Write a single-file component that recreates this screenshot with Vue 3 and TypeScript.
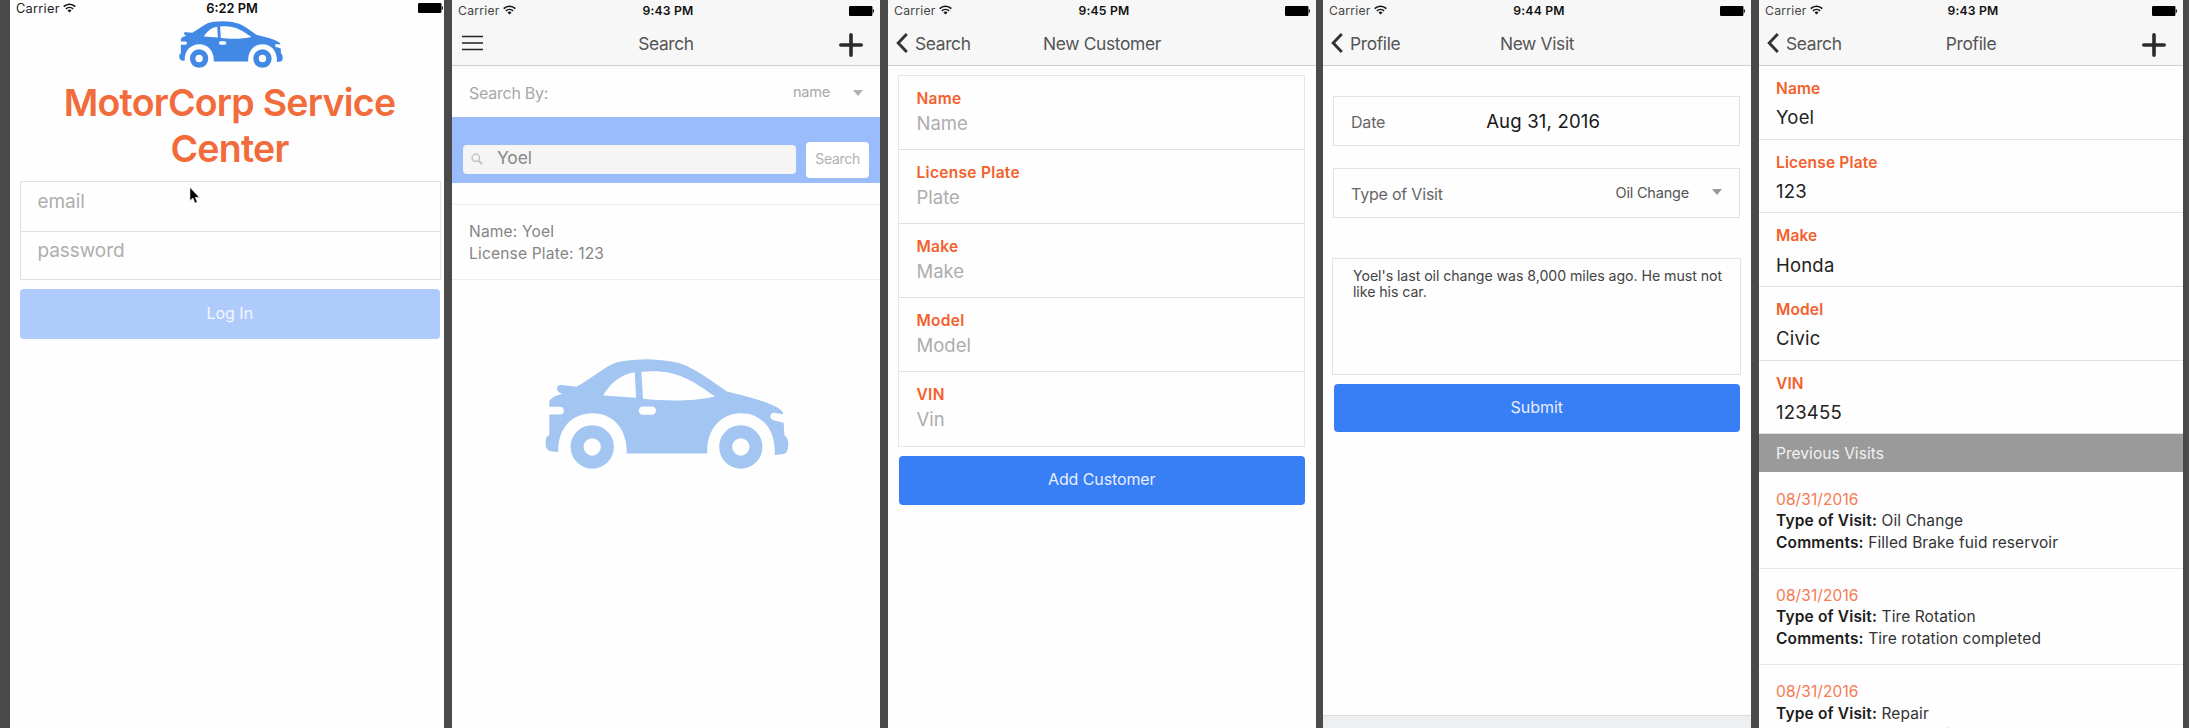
<script setup lang="ts">
import { defineComponent, h } from 'vue'

interface Field {
  label: string
  placeholder: string
  value: string
}

interface Visit {
  date: string
  type: string
  comments: string
}

const fields: Field[] = [
  { label: 'Name', placeholder: 'Name', value: 'Yoel' },
  { label: 'License Plate', placeholder: 'Plate', value: '123' },
  { label: 'Make', placeholder: 'Make', value: 'Honda' },
  { label: 'Model', placeholder: 'Model', value: 'Civic' },
  { label: 'VIN', placeholder: 'Vin', value: '123455' },
]

const visits: Visit[] = [
  { date: '08/31/2016', type: 'Oil Change', comments: 'Filled Brake fuid reservoir' },
  { date: '08/31/2016', type: 'Tire Rotation', comments: 'Tire rotation completed' },
  { date: '08/31/2016', type: 'Repair', comments: 'Replaced tires' },
]

const carBody =
  'M355 815L333 812Q317 808 317 790V778Q318 768 328 764V702H360a11.5 11.5 0 0 0 0-23H328V664Q330 650 367 640Q350 634 351 622Q354 612 366 614L409 619C450 596 480 570 520 550Q545 539 625 537Q700 539 740 556C790 580 825 608 862 633C910 645 980 660 1022 686Q1031 692 1031 701L1003 697Q992 700 993 709Q994 717 1004 720L1033 727L1035 764Q1047 772 1047 790Q1047 818 1032 820L1006 823C1010 750 970 698 904 698C845 698 800 745 803 819H561C563 745 520 698 458 698C395 698 352 745 355 815Z'
const carWindows =
  'M490 645C515 605 545 582 585 576L589 652ZM605 574C700 566 745 590 826 648C760 664 670 662 610 655Z'
const carHandle = 'M609.500 678H636.500a12.500 12.500 0 0 1 0 25H609.500a12.500 12.500 0 0 1 0-25Z'

const CarIcon = defineComponent({
  render: () =>
    h('svg', { viewBox: '315 536 734 329', fill: 'currentColor', preserveAspectRatio: 'none' }, [
      h('path', { d: carBody + carWindows + carHandle, 'fill-rule': 'evenodd' }),
      ...[457, 904].map((cx) =>
        h('circle', { cx, cy: 799, r: 45.5, fill: 'none', stroke: 'currentColor', 'stroke-width': 39 }),
      ),
    ]),
})

const StatusIcon = defineComponent({
  render: () =>
    h('svg', { viewBox: '0 0 13 10', width: 13, height: 10, fill: 'none', stroke: '#111' }, [
      h('path', { d: 'M.7 3.600A8.400 8.400 0 0 1 12.300 3.600', 'stroke-width': 1.6 }),
      h('path', { d: 'M2.900 5.900A5.200 5.200 0 0 1 10.100 5.900', 'stroke-width': 1.5 }),
      h('path', { d: 'M6.500 9.600L4.500 7.500A3 3 0 0 1 8.500 7.500Z', fill: '#111', stroke: 'none' }),
    ]),
})

const BatteryIcon = defineComponent({
  render: () =>
    h('svg', { viewBox: '0 0 26 10', width: 26, height: 10 }, [
      h('rect', { x: 0, y: 0, width: 23.4, height: 10, rx: 1.2, fill: '#000' }),
      h('path', { d: 'M24 3.200Q25.600 5 24 6.800Z', fill: '#000', stroke: '#000', 'stroke-width': 0.5 }),
    ]),
})

const BackIcon = defineComponent({
  render: () =>
    h('svg', { viewBox: '0 0 12 20', width: 12, height: 20 }, [
      h('path', { d: 'M10.800 1L2.200 10L10.800 19', fill: 'none', stroke: '#333', 'stroke-width': 2.9 }),
    ]),
})

const PlusIcon = defineComponent({
  render: () =>
    h('svg', { viewBox: '0 0 24 24', width: 24, height: 24 }, [
      h('path', { d: 'M12 1.800V22.200M1.800 12H22.200', stroke: '#2b2b2b', 'stroke-width': 3.6, 'stroke-linecap': 'round' }),
    ]),
})
</script>

<template>
  <main class="board">
    <section class="phone login">
      <div class="status">
        <span class="carrier">Carrier</span><StatusIcon class="wifi" />
        <span class="time">6:22 PM</span>
        <BatteryIcon class="battery" />
      </div>
      <CarIcon class="car-small" />
      <h1>MotorCorp Service<br />Center</h1>
      <div class="credentials">
        <div class="credential">email</div>
        <div class="credential">password</div>
        <svg class="pointer" viewBox="0 0 12 18" width="12" height="18">
          <path d="M1 .5V13.500L4 11L6 16L8.200 15.100L6.200 10.300H10.200Z" fill="#000" stroke="#ddd" stroke-width=".6" />
        </svg>
      </div>
      <div class="button faded">Log In</div>
    </section>

    <section class="phone search">
      <header>
        <div class="status">
          <span class="carrier">Carrier</span><StatusIcon class="wifi" />
          <span class="time">9:43 PM</span>
          <BatteryIcon class="battery" />
        </div>
        <nav>
          <svg class="menu" viewBox="0 0 21 16" width="21" height="16">
            <path d="M0 1.500H21M0 8H21M0 14.500H21" stroke="#222" stroke-width="1.700" />
          </svg>
          <span class="title">Search</span>
          <PlusIcon class="plus" />
        </nav>
      </header>
      <div class="search-by">
        <span>Search By:</span>
        <span class="choice">name</span>
        <i class="caret"></i>
      </div>
      <div class="search-bar">
        <div class="query">
          <svg viewBox="0 0 12 12" width="12" height="12" fill="none" stroke="#c4c4c4" stroke-width="1.500">
            <circle cx="4.800" cy="4.800" r="3.700" />
            <path d="M7.500 7.500L11.200 11.200" stroke-width="2" />
          </svg>
          <span>Yoel</span>
        </div>
        <div class="go">Search</div>
      </div>
      <div class="result">
        <div>Name: Yoel</div>
        <div>License Plate: 123</div>
      </div>
      <CarIcon class="car-large" />
    </section>

    <section class="phone customer">
      <header>
        <div class="status">
          <span class="carrier">Carrier</span><StatusIcon class="wifi" />
          <span class="time">9:45 PM</span>
          <BatteryIcon class="battery" />
        </div>
        <nav>
          <BackIcon class="back" /><span class="back-label">Search</span>
          <span class="title">New Customer</span>
        </nav>
      </header>
      <div class="form">
        <div v-for="f in fields" :key="f.label" class="form-row">
          <div class="label">{{ f.label }}</div>
          <div class="placeholder">{{ f.placeholder }}</div>
        </div>
      </div>
      <div class="button">Add Customer</div>
    </section>

    <section class="phone visit">
      <header>
        <div class="status">
          <span class="carrier">Carrier</span><StatusIcon class="wifi" />
          <span class="time">9:44 PM</span>
          <BatteryIcon class="battery" />
        </div>
        <nav>
          <BackIcon class="back" /><span class="back-label">Profile</span>
          <span class="title">New Visit</span>
        </nav>
      </header>
      <div class="line-box date-box">
        <span class="line-label">Date</span>
        <span class="date-value">Aug 31, 2016</span>
      </div>
      <div class="line-box type-box">
        <span class="line-label">Type of Visit</span>
        <span class="choice">Oil Change</span>
        <i class="caret"></i>
      </div>
      <div class="notes">Yoel's last oil change was 8,000 miles ago. He must not<br />like his car.</div>
      <div class="button">Submit</div>
      <div class="toolbar"></div>
    </section>

    <section class="phone profile">
      <header>
        <div class="status">
          <span class="carrier">Carrier</span><StatusIcon class="wifi" />
          <span class="time">9:43 PM</span>
          <BatteryIcon class="battery" />
        </div>
        <nav>
          <BackIcon class="back" /><span class="back-label">Search</span>
          <span class="title">Profile</span>
          <PlusIcon class="plus" />
        </nav>
      </header>
      <div v-for="f in fields" :key="f.label" class="info-row">
        <div class="label">{{ f.label }}</div>
        <div class="value">{{ f.value }}</div>
      </div>
      <div class="divider">Previous Visits</div>
      <div v-for="(v, i) in visits" :key="i" class="visit-row">
        <div class="visit-date">{{ v.date }}</div>
        <div><b>Type of Visit:</b> {{ v.type }}</div>
        <div><b>Comments:</b> {{ v.comments }}</div>
      </div>
    </section>
  </main>
</template>

<style>
body {
  margin: 0;
  overflow: hidden;
}
</style>

<style scoped>
.board {
  display: grid;
  grid-template-columns: 434px 428px 428px 428px 424px;
  column-gap: 8px;
  width: 2189px;
  height: 728px;
  padding-left: 10px;
  box-sizing: border-box;
  overflow: hidden;
  background: #4a4a4a;
  font-family: Inter, "Liberation Sans", sans-serif;
  font-size: 16px;
  white-space: nowrap;
}
.board * {
  box-sizing: border-box;
}
.board svg {
  display: block;
  flex: none;
}
.phone {
  display: flex;
  flex-direction: column;
  height: 728px;
  min-width: 0;
  overflow: hidden;
  background: #fefefe;
}
.visit {
  margin-left: -1px;
  width: 428px;
}
.profile {
  margin-left: -1px;
  width: 424px;
}

header {
  flex: none;
  height: 66px;
  background: #f7f7f7;
  border-bottom: 1px solid #cfcfcf;
}
.status {
  display: grid;
  grid-template-columns: 45px 13px 1fr 26px;
  height: 22px;
  padding: 0 5px 0 6px;
  font-size: 12.200px;
  line-height: 21px;
  color: #444;
}
.carrier {
  letter-spacing: 0.250px;
}
.wifi {
  margin-top: 5px;
}
.battery {
  margin-top: 5.500px;
}
.time {
  justify-self: center;
  margin-right: 29px;
  font-weight: 600;
  color: #111;
  letter-spacing: 0.200px;
}
nav {
  position: relative;
  display: flex;
  height: 43px;
  font-size: 17.400px;
  line-height: 43px;
  letter-spacing: -0.350px;
  color: #555;
}
.title {
  position: absolute;
  inset: 0;
  text-align: center;
}
.menu {
  margin: 13px 0 0 10px;
}
.plus {
  margin: 11px 17px 0 auto;
}
.back {
  margin: 11px 0 0 8px;
}
.back-label {
  margin-left: 7px;
}

.login .status {
  flex: none;
  height: 21px;
  line-height: 17px;
  padding: 0 0 0 6px;
  grid-template-columns: 47px 13px 1fr 26px;
  color: #222;
  font-size: 12.800px;
}
.login .wifi,
.login .battery {
  margin-top: 3px;
}
.login .time {
  margin-right: 30px;
  letter-spacing: 0;
}
.car-small {
  flex: none;
  width: 104px;
  height: 47px;
  margin-left: 168.500px;
  margin-top: -0.500px;
  color: #4189e5;
}
h1 {
  margin: 12px 0 0 5px;
  font-size: 37.500px;
  font-weight: 600;
  line-height: 46px;
  letter-spacing: -0.750px;
  text-align: center;
  color: #f26b3a;
}
.credentials {
  position: relative;
  height: 99px;
  margin: 9.500px 3.500px 0 9.500px;
  border: 1.500px solid #e1e1e1;
}
.credential {
  height: 48.500px;
  padding: 8px 0 0 17px;
  font-size: 19px;
  line-height: 24px;
  letter-spacing: -0.080px;
  color: #aeaeae;
}
.credential + .credential {
  padding-top: 7px;
  border-top: 1px solid #e1e1e1;
}
.pointer {
  position: absolute;
  left: 168px;
  top: 5px;
}

.button {
  flex: none;
  height: 48.500px;
  margin: 9px 11px 0 10.500px;
  border-radius: 4px;
  background: #387ef5;
  color: #e8efff;
  font-size: 16px;
  line-height: 47px;
  text-align: center;
}
.customer .button {
  letter-spacing: -0.100px;
}
.button.faded {
  height: 50px;
  margin: 9px 4.500px 0 10px;
  background: #afcbfb;
  color: #f4f8ff;
  line-height: 48px;
}

.search-by {
  display: flex;
  height: 51px;
  padding: 12px 17px 0 17px;
  border-top: 3px solid #fafafa;
  line-height: 24px;
  letter-spacing: -0.250px;
  color: #a8a8a8;
}
.choice {
  margin-left: auto;
  font-size: 14.500px;
  line-height: 22px;
  letter-spacing: -0.200px;
}
.caret {
  width: 0;
  height: 0;
  margin: 9px 0 0 23px;
  border: 5px solid transparent;
  border-top: 6px solid #b0b0b0;
  border-bottom: 0;
}
.search-bar {
  display: flex;
  height: 66px;
  padding: 25px 11px 0;
  background: #9bbcfa;
}
.query {
  display: flex;
  width: 333px;
  height: 29px;
  margin-top: 3px;
  border-radius: 4px;
  background: #f5f5f5;
  font-size: 17.500px;
  line-height: 26px;
  letter-spacing: -0.200px;
  color: #8a8a8a;
}
.query svg {
  margin: 8px 14px 0 8px;
}
.go {
  width: 63px;
  height: 35.500px;
  margin-left: 10.500px;
  border-radius: 4px;
  background: #fff;
  font-size: 14px;
  line-height: 34px;
  letter-spacing: -0.300px;
  text-align: center;
  color: #b0b0b0;
}
.result {
  height: 76px;
  margin-top: 21px;
  padding: 15.500px 17px 0;
  border: solid #eeeeee;
  border-width: 1px 0;
  font-size: 15.600px;
  line-height: 22px;
  letter-spacing: 0.150px;
  color: #858585;
}
.car-large {
  width: 244px;
  height: 110px;
  margin: 78.500px 0 0 93px;
  color: #a2c5f1;
}

.form {
  margin: 9px 11px 0 10px;
  border: 1.500px solid #e6e6e6;
}
.form-row {
  height: 74.100px;
  padding: 13px 0 0 17.500px;
  border-bottom: 1px solid #e2e2e2;
}
.form-row:last-child {
  border-bottom: 0;
}
.label {
  font-size: 15.500px;
  font-weight: 600;
  line-height: 20px;
  letter-spacing: 0.300px;
  color: #f4602c;
}
.placeholder {
  margin-top: 1px;
  font-size: 18.500px;
  line-height: 26px;
  color: #adadad;
}

.line-box {
  display: flex;
  height: 50px;
  margin: 0 11px 0 10px;
  padding: 0 17px;
  border: 1.500px solid #e3e3e3;
  line-height: 50px;
  letter-spacing: -0.200px;
  color: #666;
}
.date-box {
  margin-top: 30px;
}
.type-box {
  margin-top: 21.500px;
}
.date-value {
  margin-left: 101px;
  font-size: 18.600px;
  line-height: 48px;
  letter-spacing: 0.150px;
  color: #181818;
}
.type-box .choice {
  line-height: 48px;
  color: #555;
}
.type-box .caret {
  margin-top: 20px;
  border-top-color: #999;
}
.notes {
  height: 117px;
  margin: 40px 10px 0 8.500px;
  padding: 9px 20.500px;
  border: 1.500px solid #e3e3e3;
  font-size: 14.200px;
  line-height: 16.600px;
  letter-spacing: -0.070px;
  color: #444;
}
.toolbar {
  height: 13px;
  margin-top: auto;
  border-top: 1px solid #dcdcdc;
  background: #eeeff1;
}

.info-row {
  flex: none;
  height: 73.700px;
  padding: 13px 0 0 17px;
  border-bottom: 1px solid #e2e2e2;
}
.value {
  margin-top: 5.300px;
  font-size: 18.500px;
  line-height: 26px;
  letter-spacing: 0.200px;
  color: #222;
}
.profile .label {
  letter-spacing: 0.150px;
}
.divider {
  flex: none;
  height: 37.800px;
  padding-left: 17px;
  background: #9a9a9a;
  color: #f1f1f1;
  font-size: 15.500px;
  line-height: 40px;
  letter-spacing: 0.050px;
}
.visit-row {
  flex: none;
  height: 96.300px;
  padding: 16.300px 0 0 17px;
  border-bottom: 1.500px solid #e6e6e6;
  font-size: 15.500px;
  line-height: 21.500px;
  letter-spacing: 0.100px;
  color: #333;
}
.visit-row b {
  font-weight: 600;
  color: #1c1c1c;
  letter-spacing: 0.160px;
}
.visit-date {
  color: #f47a52;
}
.profile .plus {
  margin-right: 17px;
}
</style>
